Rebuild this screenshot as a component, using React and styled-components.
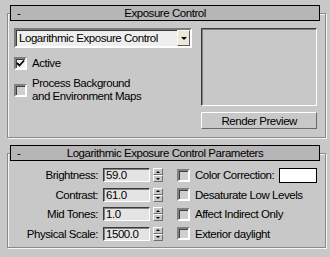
import styled, { createGlobalStyle } from 'styled-components';

const GlobalStyle = createGlobalStyle`
  html, body {
    margin: 0;
    padding: 0;
    background: #c8c8c8;
  }
  body {
    font-family: 'Liberation Sans', Arial, sans-serif;
    font-size: 11.5px;
    letter-spacing: -0.45px;
    white-space: nowrap;
    color: #000;
  }
`;

const Page = styled.div`
  width: 330px;
  height: 257px;
  padding-top: 13px;
  box-sizing: border-box;
  overflow: hidden;
`;

const Rollout = styled.div`
  margin: ${(p) => p.$top || 0}px 0 0 7px;
  width: 319px;
  box-sizing: border-box;
  border: 1px solid #8a8a8a;
  box-shadow: inset 1px 1px 0 #f4f4f4, 1px 1px 0 #f4f4f4;
`;

const Header = styled.div`
  margin: -9px 0 0 2px;
  width: 310px;
  height: 16px;
  box-sizing: border-box;
  border: 1px solid #000;
  background: #b6b6b6;
  display: grid;
  grid-template-columns: 1fr auto 1fr;
  align-items: center;
  line-height: 14px;
`;

const Minus = styled.span`
  padding-left: 6px;
`;

const Body = styled.div`
  display: flex;
  gap: 9px;
  padding: 7px 8px 8px 6px;
`;

const LeftCol = styled.div`
  width: 179px;
  display: flex;
  flex-direction: column;
`;

const RightCol = styled.div`
  width: 116px;
  display: flex;
  flex-direction: column;
  gap: 6px;
`;

const Dropdown = styled.div`
  height: 20px;
  box-sizing: border-box;
  border-style: solid;
  border-width: 2px;
  border-color: #7c7c7c #ffffff #ffffff #7c7c7c;
  box-shadow: inset 1px 1px 0 #3c3c3c;
  background: #eeeeee;
  display: flex;
  align-items: center;
  justify-content: space-between;
  padding: 0 0 0 3px;
`;

const DropButton = styled.div`
  width: 13px;
  height: 16px;
  box-sizing: border-box;
  background: #ece9d8;
  border-style: solid;
  border-width: 1px;
  border-color: #fffff8 #5a5a5a #5a5a5a #fffff8;
  display: flex;
  align-items: center;
  justify-content: center;
`;

const Triangle = styled.span`
  width: 0;
  height: 0;
  border-left: ${(p) => p.$w}px solid transparent;
  border-right: ${(p) => p.$w}px solid transparent;
  ${(p) => (p.$up ? 'border-bottom' : 'border-top')}: ${(p) => p.$h}px solid #000;
`;

const CheckRow = styled.label`
  display: flex;
  align-items: center;
  gap: 5px;
  margin-top: ${(p) => p.$top || 0}px;
  line-height: 13px;
`;

const Box = styled.span`
  flex: none;
  width: 13px;
  height: 13px;
  box-sizing: border-box;
  border-style: solid;
  border-width: 2px;
  border-color: #808080 #ffffff #ffffff #808080;
  box-shadow: inset 1px 1px 0 #404040;
  background: ${(p) => (p.$checked ? '#f2f2f2' : '#cfcfcf')};
  display: flex;
  align-items: center;
  justify-content: center;
`;

const Preview = styled.div`
  height: 78px;
  box-sizing: border-box;
  border-style: solid;
  border-width: 1px;
  border-color: #3a3a3a #ffffff #ffffff #3a3a3a;
  box-shadow: inset 1px 1px 0 #808080;
`;

const Button = styled.div`
  height: 17px;
  box-sizing: border-box;
  border-style: solid;
  border-width: 1px;
  border-color: #ffffff #6a6a6a #6a6a6a #ffffff;
  display: flex;
  align-items: center;
  justify-content: center;
`;

const Params = styled.div`
  display: flex;
  flex-direction: column;
  gap: 5.6px;
  padding: 7px 0 6px 0;
`;

const ParamRow = styled.div`
  display: flex;
  align-items: center;
  height: 14px;
`;

const ParamLabel = styled.span`
  width: 90px;
  text-align: right;
`;

const Field = styled.div`
  margin-left: 5px;
  width: 47px;
  height: 14px;
  box-sizing: border-box;
  border-style: solid;
  border-width: 1px;
  border-color: #3a3a3a #ffffff #ffffff #3a3a3a;
  box-shadow: inset 1px 1px 0 #808080;
  background: #e4e4e4;
  padding-left: 2px;
  line-height: 12px;
`;

const Spinner = styled.div`
  margin-left: 3px;
  width: 10px;
  height: 14px;
  display: flex;
  flex-direction: column;
`;

const SpinHalf = styled.div`
  flex: 1;
  box-sizing: border-box;
  border-style: solid;
  border-width: 1px;
  border-color: #ffffff #707070 #707070 #ffffff;
  display: flex;
  align-items: center;
  justify-content: center;
`;

const OptionCheck = styled.label`
  margin-left: 14px;
  display: flex;
  align-items: center;
  gap: 5px;
`;

const Swatch = styled.span`
  margin-left: 5px;
  width: 38px;
  height: 15px;
  box-sizing: border-box;
  border: 1px solid #000;
  background: #fff;
`;

function Check({ checked, children, top }) {
  return (
    <CheckRow $top={top}>
      <Box $checked={checked}>
        {checked && (
          <svg width="9" height="9" viewBox="0 0 9 9">
            <path d="M1 4 L3.5 6.5 L8 1.5" stroke="#000" strokeWidth="1.8" fill="none" />
          </svg>
        )}
      </Box>
      <span>{children}</span>
    </CheckRow>
  );
}

const params = [
  { label: 'Brightness:', value: '59.0', option: 'Color Correction:', swatch: true },
  { label: 'Contrast:', value: '61.0', option: 'Desaturate Low Levels' },
  { label: 'Mid Tones:', value: '1.0', option: 'Affect Indirect Only' },
  { label: 'Physical Scale:', value: '1500.0', option: 'Exterior daylight' },
];

export default function App() {
  return (
    <>
      <GlobalStyle />
      <Page>
        <Rollout>
          <Header>
            <Minus>-</Minus>
            <span>Exposure Control</span>
            <span />
          </Header>
          <Body>
            <LeftCol>
              <Dropdown>
                <span>Logarithmic Exposure Control</span>
                <DropButton>
                  <Triangle $w={3} $h={3} />
                </DropButton>
              </Dropdown>
              <Check checked top={9}>Active</Check>
              <Check top={7}>
                Process Background
                <br />
                and Environment Maps
              </Check>
            </LeftCol>
            <RightCol>
              <Preview />
              <Button>Render Preview</Button>
            </RightCol>
          </Body>
        </Rollout>
        <Rollout $top={15}>
          <Header>
            <Minus>-</Minus>
            <span>Logarithmic Exposure Control Parameters</span>
            <span />
          </Header>
          <Params>
            {params.map((p) => (
              <ParamRow key={p.label}>
                <ParamLabel>{p.label}</ParamLabel>
                <Field>{p.value}</Field>
                <Spinner>
                  <SpinHalf>
                    <Triangle $up $w={2} $h={2} />
                  </SpinHalf>
                  <SpinHalf>
                    <Triangle $w={2} $h={2} />
                  </SpinHalf>
                </Spinner>
                <OptionCheck>
                  <Box />
                  <span>{p.option}</span>
                </OptionCheck>
                {p.swatch && <Swatch />}
              </ParamRow>
            ))}
          </Params>
        </Rollout>
      </Page>
    </>
  );
}
